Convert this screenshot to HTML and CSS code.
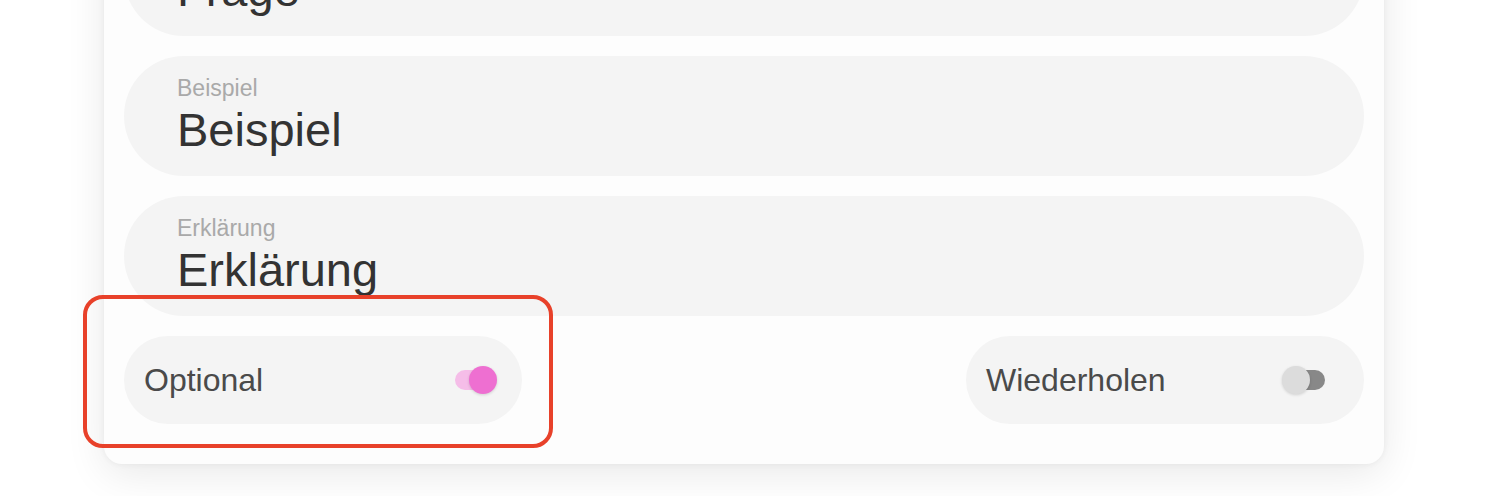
FILE: index.html
```html
<!DOCTYPE html>
<html lang="de">
<head>
  <meta charset="UTF-8">
  <meta name="viewport" content="width=device-width, initial-scale=1.0">
  <title>Karte bearbeiten</title>
  <link rel="stylesheet" href="styles.css">
</head>
<body>
  <div class="page">
    <div class="card">
      <div class="field">
        <div class="field-label">Frage</div>
        <div class="field-value">Frage</div>
      </div>
      <div class="field">
        <div class="field-label">Beispiel</div>
        <div class="field-value">Beispiel</div>
      </div>
      <div class="field">
        <div class="field-label">Erklärung</div>
        <div class="field-value">Erklärung</div>
      </div>
      <div class="option-row">
        <div class="option optional-opt">
          <span class="option-text">Optional</span>
          <span class="switch on"><span class="knob"></span></span>
        </div>
        <div class="option repeat-opt">
          <span class="option-text">Wiederholen</span>
          <span class="switch"><span class="knob"></span></span>
        </div>
      </div>
    </div>
    <div class="highlight"></div>
  </div>
</body>
</html>
```

FILE: styles.css
```css
body {
  margin: 0;
  background: #fff;
  font-family: 'Liberation Sans', Arial, sans-serif;
  overflow: hidden;
}
.page {
  position: relative;
  display: flow-root;
  padding: 0 110px 40px 104px;
}
.card {
  margin-top: -104px;
  background: #fdfdfd;
  border-radius: 18px;
  box-shadow: 0 10px 40px rgba(0,0,0,0.09), 0 0 6px rgba(0,0,0,0.06);
  padding: 20px 20px 40px 20px;
  display: flex;
  flex-direction: column;
  gap: 20px;
}
.field {
  background: #f4f4f4;
  border-radius: 60px;
  height: 120px;
  box-sizing: border-box;
  padding: 18px 50px 18px 53px;
}
.field-label {
  font-size: 23px;
  line-height: 28px;
  color: #a9a9a9;
}
.field-value {
  font-size: 47px;
  line-height: 56px;
  color: #333;
}
.option-row {
  display: flex;
  justify-content: space-between;
}
.option {
  width: 398px;
  height: 88px;
  box-sizing: border-box;
  background: #f4f4f4;
  border-radius: 44px;
  display: flex;
  align-items: center;
  justify-content: space-between;
  padding: 0 33px 0 20px;
}
.repeat-opt {
  padding-right: 39px;
}
.option-text {
  font-size: 32px;
  color: #4a4a4a;
}
.switch {
  position: relative;
  width: 34px;
  height: 20px;
  border-radius: 10px;
  background: #888;
}
.switch .knob {
  position: absolute;
  top: -4px;
  left: -9px;
  width: 28px;
  height: 28px;
  border-radius: 50%;
  background: #dcdcdc;
  box-shadow: 0 1px 3px rgba(0,0,0,0.15);
}
.switch.on {
  background: #f5bde8;
}
.switch.on .knob {
  left: 14px;
  background: #ee6fd1;
}
.highlight {
  position: absolute;
  left: 83px;
  top: 295px;
  width: 470px;
  height: 153px;
  box-sizing: border-box;
  border: 4px solid #e8412a;
  border-radius: 20px;
}
```
